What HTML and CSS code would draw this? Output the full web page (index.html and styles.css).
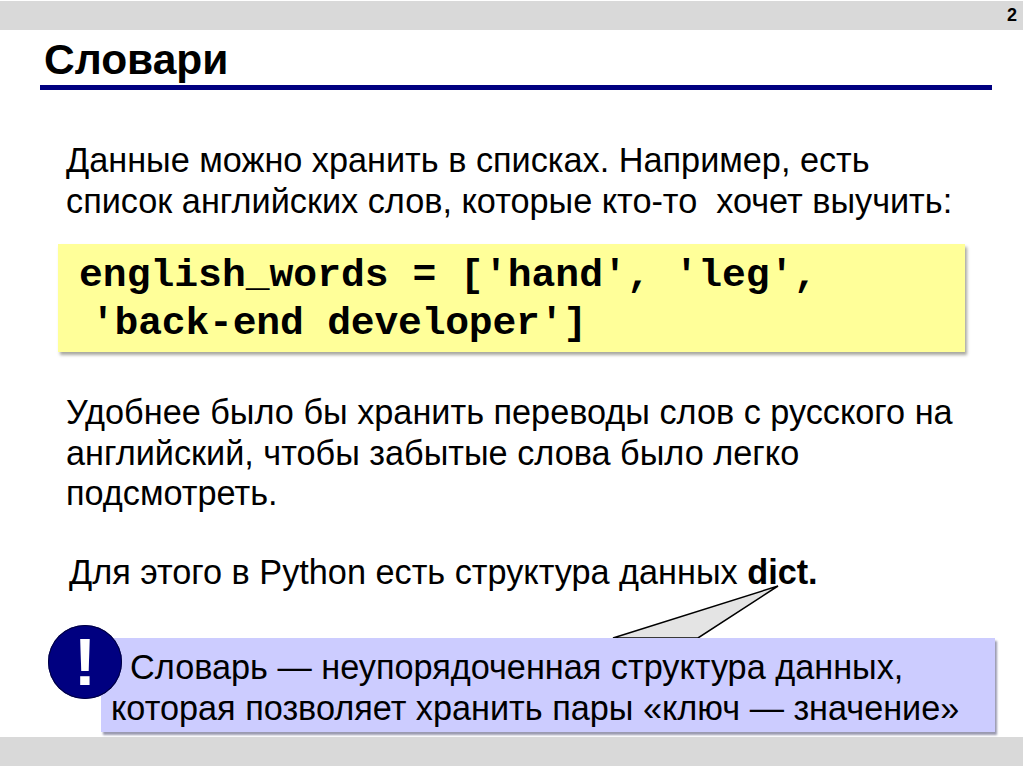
FILE: index.html
```html
<!DOCTYPE html>
<html lang="ru">
<head>
<meta charset="utf-8">
<title>Словари</title>
<link rel="stylesheet" href="styles.css">
</head>
<body>
<div class="slide">
  <div class="bar top"><span class="num">2</span></div>
  <h1 class="title">Словари</h1>
  <div class="rule"></div>
  <main class="content">
    <p class="text first">Данные можно хранить в списках. Например, есть<br>список английских слов, которые кто-то&nbsp; хочет выучить:</p>
    <pre class="code">english_words = ['hand', 'leg',
<span class="indent"></span><span class="code-second">'back-end developer']</span></pre>
    <p class="text second">Удобнее было бы хранить переводы слов с русского на<br>английский, чтобы забытые слова было легко<br>подсмотреть.</p>
    <p class="text third">Для этого в Python есть структура данных <b>dict.</b></p>
    <div class="note">
      <svg class="pointer" width="200" height="54" viewBox="0 0 200 54" aria-hidden="true"><polygon points="167,1 2,53 87,53" fill="#e4e4e4" stroke="#000" stroke-width="1.5"/></svg>
      <div class="badge">!</div>
      <p class="note-text">&nbsp;&nbsp;Словарь — неупорядоченная структура данных,<br>которая позволяет хранить пары «ключ — значение»</p>
    </div>
  </main>
  <div class="bar bottom"></div>
</div>
</body>
</html>
```
FILE: styles.css
```css
html, body {
  margin: 0;
  padding: 0;
  background: #fff;
}
.slide {
  width: 1024px;
  height: 767px;
  box-sizing: border-box;
  padding-top: 1px;
  display: flex;
  flex-direction: column;
  overflow: hidden;
  isolation: isolate;
  font-family: "Liberation Sans", Arial, sans-serif;
  color: #000;
}
.bar {
  height: 29px;
  background: #d9d9d9;
  flex: none;
  margin-right: 1px;
}
.top {
  display: flex;
  justify-content: flex-end;
  align-items: center;
}
.num {
  font-size: 18px;
  font-weight: bold;
  margin-right: 6px;
}
.title {
  margin: 8px 0 0 44px;
  font-size: 42.5px;
  line-height: 44px;
  font-weight: bold;
}
.rule {
  height: 5px;
  margin: 3px 32px 0 40px;
  background: #000080;
  flex: none;
}
.content {
  flex: 1;
  display: flex;
  flex-direction: column;
  padding-left: 66px;
  min-height: 0;
}
.text {
  margin: 0;
  font-size: 34.25px;
  line-height: 41px;
}
.first {
  margin-top: 50px;
}
.code {
  margin: 22px 0 0 -8px;
  width: 907px;
  height: 108px;
  box-sizing: border-box;
  padding: 8px 0 0 21px;
  background: #ffff99;
  box-shadow: 2px 3px 3px #a8a8a0;
  font-family: "Liberation Mono", "Courier New", monospace;
  font-weight: bold;
  font-size: 39.7px;
  line-height: 48px;
}
.indent {
  display: inline-block;
  width: 12px;
}
.code-second {
  letter-spacing: -0.2px;
}
.second {
  margin-top: 40px;
  line-height: 40.5px;
}
.third {
  margin: 38.5px 0 0 3px;
}
.note {
  position: relative;
  margin: 45px 0 0 35px;
  width: 894px;
  height: 94px;
  box-sizing: border-box;
  background: #ccccff;
  box-shadow: 2px 3px 2px #9a9ab0;
}
.note-text {
  position: relative;
  margin: 0;
  padding: 9px 0 0 10px;
  font-size: 34.25px;
  line-height: 41px;
}
.pointer {
  position: absolute;
  left: 510px;
  top: -53px;
  z-index: -1;
}
.badge {
  position: absolute;
  left: -53px;
  top: -13px;
  width: 74px;
  height: 74px;
  border-radius: 50%;
  background: #000080;
  color: #fff;
  font-size: 66px;
  font-weight: bold;
  line-height: 74px;
  text-align: center;
  box-shadow: 0 0 0 1px #000040 inset;
}
.bottom {
  margin-bottom: 1px;
}
```
